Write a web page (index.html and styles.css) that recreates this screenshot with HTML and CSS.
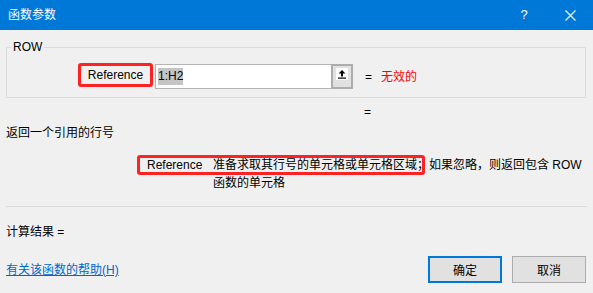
FILE: index.html
```html
<!DOCTYPE html>
<html lang="zh-CN">
<head>
    <meta charset="UTF-8">
    <title>函数参数</title>
    <link rel="stylesheet" href="styles.css">
</head>
<body>
    <div class="titlebar">
        <span class="title-text">函数参数</span>
        <div class="caption-btns">
            <span class="caption-btn">?</span>
            <span class="caption-btn">
                <svg width="11" height="11" viewBox="0 0 11 11">
                    <path d="M0.5 0.5 L10.5 10.5 M10.5 0.5 L0.5 10.5" stroke="#fff" stroke-width="1.1" fill="none"/>
                </svg>
            </span>
        </div>
    </div>

    <fieldset class="func-box">
        <legend>ROW</legend>
        <div class="arg-row">
            <div class="arg-label">Reference</div>
            <div class="arg-input">
                <span class="sel">1:H2</span>
                <span class="ref-btn">
                    <svg width="12" height="12" viewBox="0 0 12 12">
                        <rect width="12" height="12" fill="#fff"/>
                        <path d="M6 2 L9.5 5.5 L7 5.5 L7 8.5 L5 8.5 L5 5.5 L2.5 5.5 Z" fill="#000"/>
                        <rect x="2" y="9.5" width="8" height="1.2" fill="#000"/>
                    </svg>
                </span>
            </div>
            <span class="arg-eq">=</span>
            <span class="arg-value">无效的</span>
        </div>
    </fieldset>

    <div class="result-eq">=</div>
    <div class="func-desc">返回一个引用的行号</div>

    <div class="arg-help">
        <span class="help-name">Reference</span>
        <span class="help-text">准备求取其行号的单元格或单元格区域；如果忽略，则返回包含 ROW<br>函数的单元格</span>
        <span class="mark"></span>
    </div>

    <div class="divider"></div>

    <div class="calc-result">计算结果 =</div>

    <div class="footer">
        <a class="help-link" href="#">有关该函数的帮助(H)</a>
        <div class="footer-btns">
            <button class="btn btn-primary">确定</button>
            <button class="btn">取消</button>
        </div>
    </div>
</body>
</html>
```

FILE: styles.css
```css
:root {
    --accent: #0078d7;
    --mark-red: #ff2222;
    --bg: #f0f0f0;
    --line: #dcdcdc;
}

body {
    margin: 0;
    width: 593px;
    height: 293px;
    overflow: hidden;
    background: var(--bg);
    color: #000;
    font-family: "Liberation Sans", "Noto Sans CJK SC", sans-serif;
    font-size: 12px;
    line-height: 16px;
}

/* Title bar */
.titlebar {
    height: 30px;
    background: var(--accent);
    color: #fff;
    display: flex;
    align-items: center;
    justify-content: space-between;
    padding-left: 8px;
}

.title-text {
    font-size: 12px;
}

.caption-btns {
    display: flex;
    height: 100%;
}

.caption-btn {
    width: 46px;
    height: 30px;
    display: flex;
    align-items: center;
    justify-content: center;
    font-size: 13px;
}

/* Function box */
.func-box {
    margin: 10px 7px 0 6px;
    padding: 9px 0 7px 0;
    border: 1px solid var(--line);
    min-width: 0;
}

.func-box legend {
    margin-left: 4px;
    padding: 0 2px;
    line-height: 14px;
    font-size: 12px;
}

.arg-row {
    display: flex;
    align-items: center;
    padding-left: 71px;
    height: 27px;
}

.arg-label {
    box-sizing: border-box;
    width: 75px;
    height: 24px;
    margin-top: -3px;
    border: 3px solid var(--mark-red);
    border-radius: 3px;
    display: flex;
    align-items: center;
    justify-content: center;
}

.arg-input {
    box-sizing: border-box;
    width: 198px;
    height: 25px;
    margin-left: 2px;
    background: #fff;
    border: 1px solid #b4b4b4;
    border-right: none;
    display: flex;
    align-items: center;
    padding-left: 2px;
}

.sel {
    background: #c4c4c4;
    line-height: 17px;
}

.ref-btn {
    box-sizing: border-box;
    margin-left: auto;
    width: 22px;
    height: 25px;
    margin-top: -1px;
    margin-bottom: -1px;
    background: #e1e1e1;
    border: 2px solid #adadad;
    display: flex;
    align-items: flex-start;
    justify-content: center;
    padding-top: 2px;
}

.arg-eq {
    margin-left: 12px;
}

.arg-value {
    margin-left: 9px;
    color: #ff0000;
}

/* Description */
.result-eq {
    margin-top: 6px;
    padding-left: 364px;
}

.func-desc {
    margin-top: 5px;
    padding-left: 6px;
}

.arg-help {
    position: relative;
    margin-top: 15px;
    display: flex;
    padding-left: 147px;
    line-height: 18px;
}

.help-name {
    width: 66px;
    flex-shrink: 0;
}

.help-text {
    white-space: nowrap;
}

.mark {
    position: absolute;
    left: 137px;
    top: -1px;
    width: 288px;
    height: 20px;
    box-sizing: border-box;
    border: 3px solid var(--mark-red);
    border-radius: 3px;
}

.divider {
    margin: 14px 6px 0 6px;
    border-top: 1px solid var(--line);
}

.calc-result {
    margin-top: 17px;
    padding-left: 6px;
}

/* Footer */
.footer {
    margin-top: 16px;
    padding: 0 7px 0 6px;
    display: flex;
    align-items: center;
    justify-content: space-between;
}

.help-link {
    color: #0066cc;
    text-decoration: underline;
}

.footer-btns {
    display: flex;
    gap: 10px;
}

.btn {
    box-sizing: border-box;
    width: 74px;
    height: 27px;
    padding: 0;
    background: #e1e1e1;
    border: 1px solid #adadad;
    font-family: inherit;
    font-size: 12px;
    color: #000;
}

.btn-primary {
    border: 2px solid var(--accent);
}
```
